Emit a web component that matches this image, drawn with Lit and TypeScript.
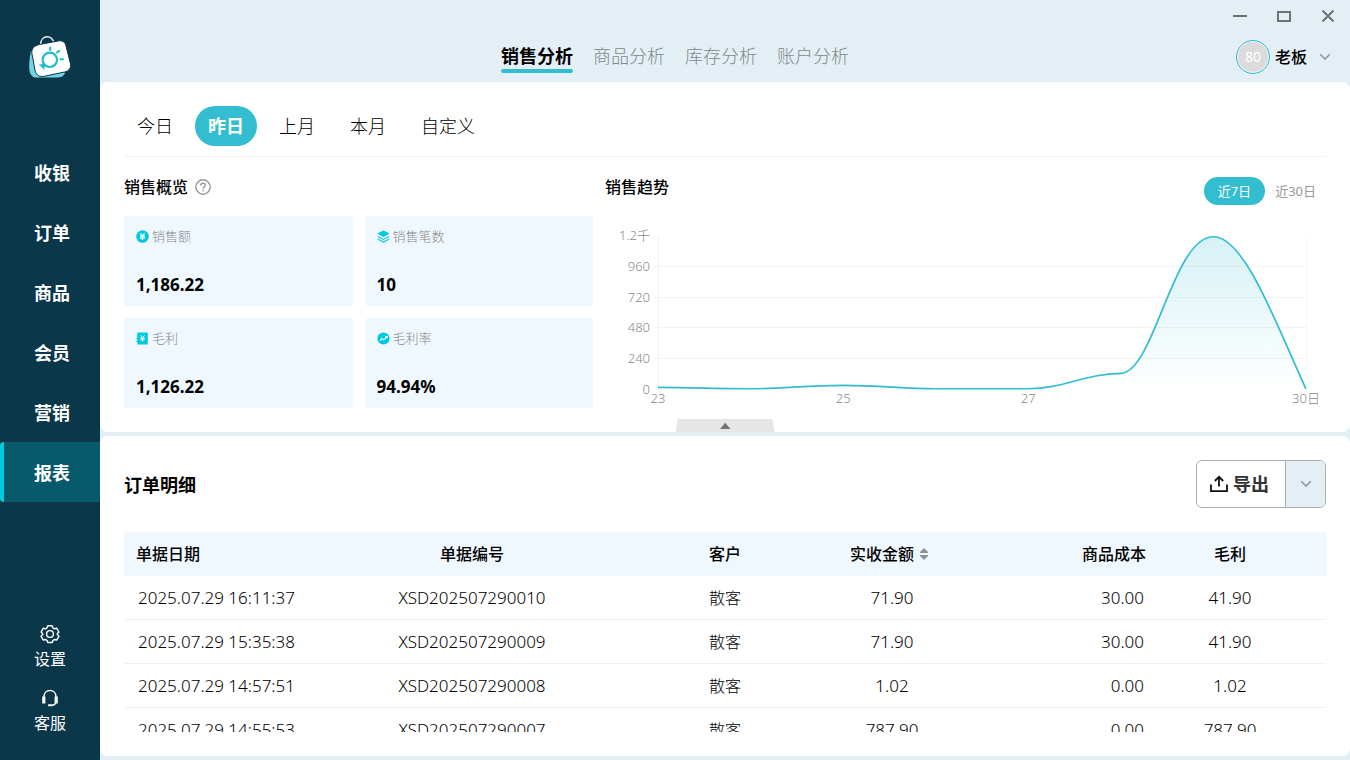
import { LitElement, html, css, svg } from "lit";
import { customElement, state } from "lit/decorators.js";
import { classMap } from "lit/directives/class-map.js";

const NAV = ["收银", "订单", "商品", "会员", "营销", "报表"];
const TABS = ["销售分析", "商品分析", "库存分析", "账户分析"];
const PERIODS = ["今日", "昨日", "上月", "本月", "自定义"];
const RANGES = ["近7日", "近30日"];

const ORDERS = [
  ["2025.07.29 16:11:37", "XSD202507290010", "散客", "71.90", "30.00", "41.90"],
  ["2025.07.29 15:35:38", "XSD202507290009", "散客", "71.90", "30.00", "41.90"],
  ["2025.07.29 14:57:51", "XSD202507290008", "散客", "1.02", "0.00", "1.02"],
  ["2025.07.29 14:55:53", "XSD202507290007", "散客", "787.90", "0.00", "787.90"],
];

const coinIcon = svg`<circle cx="6.5" cy="6.5" r="6.3" fill="#00c8de"/>
  <path d="M4.4 3.4 6.5 5.8 8.6 3.4M6.5 5.8v4.2M4 6.2h5M4 8.1h5" fill="none" stroke="#fff" stroke-width="1.2"/>`;
const layersIcon = svg`<path d="M6.500 .4 12.600 3.600 6.500 7 .4 3.600z" fill="#00c8de"/>
  <path d="M.8 6.400 6.500 9.400l5.700-3M.8 9.100l5.700 3 5.700-3" fill="none" stroke="#00c8de" stroke-width="1.100"/>`;
const bookIcon = svg`<path d="M1.400.5h10.400v12H1.400V9.900H.4V8.700h1V7.200H.4V6h1V4.600H.4V3.400h1z" fill="#00c8de"/>
  <path d="M4.600 3.400 6.500 5.600 8.400 3.400M6.500 5.600v3.800M4.300 6h4.400M4.300 7.800h4.400" fill="none" stroke="#fff" stroke-width="1"/>`;
const trendIcon = svg`<circle cx="6.500" cy="6.500" r="6.100" fill="#00c8de"/>
  <path d="M2.800 8.600 5 6.400 6.600 7.800 10 4.600M8.200 4.500h2v1.800" fill="none" stroke="#fff" stroke-width="1.100"/>`;

const STATS = [
  { label: "销售额", value: "1,186.22", icon: coinIcon },
  { label: "销售笔数", value: "10", icon: layersIcon },
  { label: "毛利", value: "1,126.22", icon: bookIcon },
  { label: "毛利率", value: "94.94%", icon: trendIcon },
];

@customElement("sales-trend")
class SalesTrend extends LitElement {
  static styles = css`
    :host { display: block; height: 192px; overflow: hidden; }
    .chart { display: block; width: 100%; height: 192px; }
    .label { font-family: "Noto Sans", "Noto Sans CJK SC", sans-serif; font-size: 13px; font-weight: 300; fill: #888; }
    .grid { stroke: #f2f2f2; stroke-width: 1; }
    .axis { stroke: #f7f7f7; stroke-width: 1; }
    .line { fill: none; stroke: #32bed0; stroke-width: 1.7; }
  `;

  @state() private width = 721;
  private observer?: ResizeObserver;

  connectedCallback() {
    super.connectedCallback();
    this.observer = new ResizeObserver(([entry]) => {
      this.width = Math.round(entry.contentRect.width);
    });
    this.observer.observe(this);
  }

  disconnectedCallback() {
    this.observer?.disconnect();
    super.disconnectedCallback();
  }

  render() {
    const left = 53;
    const right = this.width - 20;
    const top = 19;
    const base = 173;
    const step = (right - left) / 7;
    const sales = [12, 2, 28, 2, 2, 122, 1186.22, 0];
    const x = (i: number) => left + i * step;
    const y = (v: number) => base - (v / 1200) * (base - top);
    // Horizontal reach and value of the two control points of each segment.
    const curve = [
      [0.4, 10, 0.7, 2],
      [0.35, 2, 0.6, 28],
      [0.4, 28, 0.65, 2],
      [0.35, 2, 0.65, 2],
      [0.38, 2, 0.6, 118],
      [0.36, 128, 0.56, 1186.22],
      [0.34, 1186.22, 0.68, 500],
    ];
    let d = `M${x(0)} ${y(sales[0])}`;
    curve.forEach(([a, va, b, vb], i) => {
      d += `C${x(i + a)} ${y(va)} ${x(i + b)} ${y(vb)} ${x(i + 1)} ${y(sales[i + 1])}`;
    });
    const ticks: [number, string][] = [[0, "0"], [240, "240"], [480, "480"], [720, "720"], [960, "960"], [1200, "1.2千"]];
    const days: [number, string][] = [[0, "23"], [2, "25"], [4, "27"], [7, "30日"]];
    return html`<svg class="chart" viewBox="0 0 ${this.width} 192" role="img" aria-label="销售趋势">
      <defs>
        <linearGradient id="fill" x1="0" y1="0" x2="0" y2="1">
          <stop offset="0" stop-color="#32bed0" stop-opacity="0.2"></stop>
          <stop offset="1" stop-color="#32bed0" stop-opacity="0"></stop>
        </linearGradient>
      </defs>
      ${ticks.map(([v, t]) => svg`
        ${v > 0 && v < 1200 ? svg`<line class="grid" x1=${left - 4} x2=${right} y1=${Math.round(y(v)) + 0.5} y2=${Math.round(y(v)) + 0.5}/>` : ""}
        <text class="label" x="45" y=${y(v) + 5} text-anchor="end">${t}</text>`)}
      <line class="grid" x1=${left + 0.5} x2=${left + 0.5} y1=${top} y2=${base}></line>
      <line class="axis" x1=${right + 0.5} x2=${right + 0.5} y1=${top} y2=${base}></line>
      <path d="${d}V${base}H${left}Z" fill="url(#fill)"></path>
      <path class="line" d=${d}></path>
      ${days.map(([i, t]) => svg`<text class="label" x=${x(i)} y="187" text-anchor="middle">${t}</text>`)}
    </svg>`;
  }
}

@customElement("app-root")
class AppRoot extends LitElement {
  @state() private nav = "报表";
  @state() private tab = "销售分析";
  @state() private period = "昨日";
  @state() private range = "近7日";

  static styles = css`
    :host {
      display: grid;
      grid-template-columns: 100px minmax(0, 1fr);
      grid-template-rows: auto minmax(0, 1fr);
      height: 100vh;
      overflow: hidden;
      background: #e4eff5;
      color: #000;
      font: 16px/24px "Noto Sans", "Noto Sans CJK SC", sans-serif;
    }
    *, *::before, *::after { box-sizing: border-box; }
    button { margin: 0; padding: 0; border: 0; background: none; color: inherit; font: inherit; cursor: pointer; }
    h2 { margin: 0; }
    svg { display: block; flex: none; }

    .sidebar {
      grid-column: 1; grid-row: 1 / 3; z-index: 1;
      display: flex; flex-direction: column;
      background: #0b374a; color: #fff;
    }
    .logo { height: 142px; padding: 35px 0 0 28px; }
    .nav { display: flex; flex-direction: column; }
    .nav-item { height: 60px; padding: 2px 0 0 4px; font-size: 18px; font-weight: 700; }
    .nav-item.on {
      border-radius: 4px 0 0 4px;
      background: linear-gradient(90deg, #00cbe2 4px, #075a6c 4px);
    }
    .tools { display: flex; flex-direction: column; gap: 16px; margin-top: auto; padding-bottom: 24px; }
    .tool { display: flex; flex-direction: column; align-items: center; gap: 2px; line-height: 26px; }

    .header { grid-column: 1 / 3; grid-row: 1; display: grid; grid-template-columns: 1fr auto 1fr; height: 82px; }
    .tabs { grid-column: 2; display: flex; gap: 20px; padding-top: 42px; }
    .tab { height: 31px; padding-bottom: 3px; font-size: 18px; font-weight: 300; line-height: 28px; color: #7f888b; }
    .tab.on { position: relative; font-weight: 700; color: #000; }
    .tab.on::after {
      content: ""; position: absolute; left: 0; right: 0; bottom: 0; height: 4px;
      border-radius: 2px; background: #32bed0;
    }
    .corner { display: flex; flex-direction: column; align-items: flex-end; }
    .window { display: flex; }
    .window-btn { display: grid; place-items: center; width: 44px; height: 32px; }
    .user { display: flex; align-items: center; height: 50px; padding-right: 19px; font-weight: 500; }
    .avatar {
      display: grid; place-items: center; width: 34px; height: 34px; margin-right: 5px;
      border: 1px solid #32bed0; border-radius: 50%; background: #dbdbdb;
      box-shadow: inset 0 0 0 1px #eef4f6; color: #fff; font-size: 14px; font-weight: 400;
    }
    .user-chevron { margin-left: 12px; }

    .main { grid-column: 2; grid-row: 2; display: flex; flex-direction: column; gap: 4px; min-height: 0; padding-bottom: 4px; }
    .card { position: relative; background: #fff; border-radius: 8px; padding: 24px; }

    .periods { display: flex; gap: 9px; padding-bottom: 10px; border-bottom: 1px solid #f1f4fa; }
    .period { height: 40px; padding: 0 13px; border-radius: 20px; font-size: 18px; font-weight: 300; }
    .period.on { background: #32bed0; color: #fff; font-weight: 700; }

    .overview { display: grid; grid-template-columns: minmax(0, 469fr) minmax(0, 721fr); column-gap: 12px; }
    .section-head { display: flex; align-items: center; justify-content: space-between; height: 59px; }
    .section-title { display: flex; align-items: center; gap: 7px; font-size: 16px; font-weight: 500; }
    .stats { display: grid; grid-template-columns: 1fr 1fr; gap: 12px; }
    .stat {
      display: flex; flex-direction: column; justify-content: space-between;
      height: 90px; padding: 12px; border-radius: 4px; background: #f0f8ff;
    }
    .stat-label { display: flex; align-items: center; gap: 3px; font-size: 13px; font-weight: 300; line-height: 16px; color: #888; }
    .stat-value { font-size: 17px; line-height: 18px; font-weight: 700; }
    .ranges { display: flex; padding-top: 8px; }
    .range { height: 28px; padding: 0 10px; border-radius: 14px; font-size: 13px; color: #999; }
    .range.on { padding: 0 14px; background: #32bed0; color: #fff; }
    .collapse { position: absolute; left: 50%; bottom: 0; transform: translateX(-50%); }

    .orders { display: flex; flex-direction: column; flex: 1; min-height: 0; }
    .orders-head { display: flex; justify-content: space-between; align-items: center; margin-bottom: 24px; }
    .orders-title { padding-top: 2px; font-size: 18px; font-weight: 700; }
    .export { display: flex; height: 48px; border: 1px solid #adadad; border-radius: 6px; overflow: hidden; }
    .export-main { display: flex; align-items: center; gap: 5px; padding: 0 16px 0 13px; font-size: 18px; font-weight: 700; color: #333; }
    .export-more { display: grid; place-items: center; width: 40px; border-left: 1px solid #adadad; background: #e4eff5; }

    .scroll { flex: 1; min-height: 0; overflow: auto; scrollbar-width: none; }
    .table { width: 100%; table-layout: fixed; border-collapse: separate; border-spacing: 0; }
    .table th { height: 44px; padding: 0; background: #f0f8ff; font-size: 16px; font-weight: 500; }
    .table td { height: 44px; padding: 0; border-bottom: 1px solid #f0f0f0; text-align: center; font-size: 17px; font-weight: 300; }
    .c-date { width: 220px; } .c-no { width: 256px; } .c-who { width: 250px; }
    .c-sum { width: 84px; } .c-cost { width: 224px; } .c-profit { width: 168px; }
    .table .date { text-align: left; padding-left: 14px; }
    .table th.date { padding-left: 12px; }
    .table .who { font-size: 16px; }
    .table .cost { text-align: right; padding-right: 14px; }
    .table th.cost { padding-right: 12px; }
    .table .profit { padding-right: 24px; }
    .sort { display: flex; align-items: center; gap: 6px; width: 100%; font-weight: 500; white-space: nowrap; }
  `;

  private chevron(cls = "") {
    return html`<svg class=${cls} width="12" height="8" viewBox="0 0 12 8" fill="none" stroke="#8f999e" stroke-width="1.6"><path d="M1.2 1.2 6 6l4.8-4.8"></path></svg>`;
  }

  render() {
    return html`
      <aside class="sidebar">
        <div class="logo">
          <svg width="44" height="44" viewBox="0 0 44 44" fill="none">
            <path d="M3 16C1.4 23 .8 32 1.6 36c.7 4 3 6.6 7 6.6h21c3.5 0 6-1.5 7.6-4.6z" fill="#74d5e2"/>
            <path d="M12.6 10.5C12 -.5 25 -1 26 8.5" stroke="#e5f3f5" stroke-width="1.5"/>
            <path d="M11.5 9.500 30 6c4.500-.8 7 1.100 8 4.900l4.300 17.100c1.200 5-1.300 8-5.700 9l-20 4.200c-5 1-8.500-.9-9.600-6L4 19c-1-5.200 2-8.300 7.500-9.500z" fill="#fff" stroke="#0b374a" stroke-width="1"/>
            <circle cx="21.800" cy="24.800" r="7.200" stroke="#1dbdcb" stroke-width="2.200"/>
            <path d="M22.200 15v-2.600M29 17.600l2.200-1.900M32.300 24.300h2.600" stroke="#1dbdcb" stroke-width="2" stroke-linecap="round"/>
            <path d="M10 29.200c2.600.6 4.400.2 5.800-.9l1.800 2.600c-1.400 1-1.500 2.400-1 4.600-1.400-1.800-3-3.900-6.600-6.300z" fill="#1dbdcb"/>
          </svg>
        </div>
        <nav class="nav">
          ${NAV.map((n) => html`<button class=${classMap({ "nav-item": true, on: n === this.nav })} @click=${() => (this.nav = n)}>${n}</button>`)}
        </nav>
        <div class="tools">
          <button class="tool">
            <svg width="20" height="20" viewBox="0 0 20 20" fill="none" stroke="#fff" stroke-width="1.4" stroke-linejoin="round">
              <path d="M7.800 1.700h4.400l.8 2.300 1.400.8 2.400-.5 2.100 3.700-1.600 1.800v.8l1.600 1.700-2.100 3.700-2.400-.5-1.400.8-.8 2.200H7.800L7 16.300l-1.400-.8-2.400.5-2.100-3.700 1.600-1.700v-.8L1.100 8l2.100-3.700 2.400.5L7 4z"/>
              <circle cx="10" cy="10" r="3.400"/>
            </svg>
            设置
          </button>
          <button class="tool">
            <svg width="20" height="20" viewBox="0 0 20 20" fill="none" stroke="#fff">
              <path d="M4 10.500V8.800C4 5 6.600 2.600 10 2.600S16 5 16 8.800v1.700" stroke-width="1.500"/>
              <path d="M3.800 8.500v7" stroke-width="3.200"/>
              <path d="M16.200 8.500v7" stroke-width="3.200"/>
              <path d="M15.800 14.500c-.4 1.700-1.700 2.500-3.600 2.800" stroke-width="1.300"/>
              <path d="M8.800 17.200h3" stroke-width="2" stroke-linecap="round"/>
            </svg>
            客服
          </button>
        </div>
      </aside>

      <header class="header">
        <nav class="tabs">
          ${TABS.map((t) => html`<button class=${classMap({ tab: true, on: t === this.tab })} @click=${() => (this.tab = t)}>${t}</button>`)}
        </nav>
        <div class="corner">
          <div class="window">
            <button class="window-btn" aria-label="最小化"><svg width="14" height="14" viewBox="0 0 14 14"><path d="M0 7h14" stroke="#6b7375" stroke-width="2"/></svg></button>
            <button class="window-btn" aria-label="最大化"><svg width="14" height="12" viewBox="0 0 14 12"><path d="M1 2h12v9H1z" fill="none" stroke="#6b7375" stroke-width="2"/></svg></button>
            <button class="window-btn" aria-label="关闭"><svg width="12" height="12" viewBox="0 0 12 12"><path d="M.5.5l11 11M11.500.5l-11 11" stroke="#6b7375" stroke-width="2"/></svg></button>
          </div>
          <button class="user"><span class="avatar">80</span>老板${this.chevron("user-chevron")}</button>
        </div>
      </header>

      <main class="main">
        <section class="card">
          <div class="periods">
            ${PERIODS.map((p) => html`<button class=${classMap({ period: true, on: p === this.period })} @click=${() => (this.period = p)}>${p}</button>`)}
          </div>
          <div class="overview">
            <div>
              <div class="section-head">
                <h2 class="section-title">销售概览
                  <svg width="16" height="16" viewBox="0 0 16 16" fill="none" stroke="#999" stroke-width="1.4">
                    <circle cx="8" cy="8" r="7.200"/>
                    <path d="M5.700 6.500c0-1.500 1-2.300 2.300-2.300s2.300.8 2.300 2c0 1.600-2.200 1.800-2.200 3.500M8.100 10.800v1.400"/>
                  </svg>
                </h2>
              </div>
              <div class="stats">
                ${STATS.map((s) => html`<div class="stat">
                  <div class="stat-label"><svg width="13" height="13" viewBox="0 0 13 13">${s.icon}</svg>${s.label}</div>
                  <div class="stat-value">${s.value}</div>
                </div>`)}
              </div>
            </div>
            <div>
              <div class="section-head">
                <h2 class="section-title">销售趋势</h2>
                <div class="ranges">
                  ${RANGES.map((r) => html`<button class=${classMap({ range: true, on: r === this.range })} @click=${() => (this.range = r)}>${r}</button>`)}
                </div>
              </div>
              <sales-trend></sales-trend>
            </div>
          </div>
          <button class="collapse" aria-label="收起">
            <svg width="99" height="13" viewBox="0 0 99 13"><path d="M3.500 0h92q1.300 0 1.600 1.300L99 13H0L1.900 1.300Q2.200 0 3.500 0z" fill="#e6e6e6"/><path d="M44.500 10 49.700 3.700 55 10z" fill="#757575"/></svg>
          </button>
        </section>

        <section class="card orders">
          <div class="orders-head">
            <h2 class="orders-title">订单明细</h2>
            <div class="export">
              <button class="export-main">
                <svg width="18" height="18" viewBox="0 0 18 18" fill="none" stroke="#111" stroke-width="1.800"><path d="M1 9.500v6.700h16V9.500M9 11.500V2M4.800 6 9 1.800 13.200 6"/></svg>
                导出
              </button>
              <button class="export-more" aria-label="更多导出选项">${this.chevron()}</button>
            </div>
          </div>
          <div class="scroll">
            <table class="table">
              <thead>
                <tr>
                  <th class="c-date date">单据日期</th>
                  <th class="c-no">单据编号</th>
                  <th class="c-who">客户</th>
                  <th class="c-sum">
                    <button class="sort">实收金额
                      <svg width="8" height="12" viewBox="0 0 8 12" fill="#8b9499"><path d="M4 0 8 4v1H0V4zM0 7h8v1L4 12 0 8z"/></svg>
                    </button>
                  </th>
                  <th class="c-cost cost">商品成本</th>
                  <th class="c-profit profit">毛利</th>
                </tr>
              </thead>
              <tbody>
                ${ORDERS.map(([date, no, who, sum, cost, profit]) => html`<tr>
                  <td class="date">${date}</td>
                  <td>${no}</td>
                  <td class="who">${who}</td>
                  <td>${sum}</td>
                  <td class="cost">${cost}</td>
                  <td class="profit">${profit}</td>
                </tr>`)}
              </tbody>
            </table>
          </div>
        </section>
      </main>
    `;
  }
}
